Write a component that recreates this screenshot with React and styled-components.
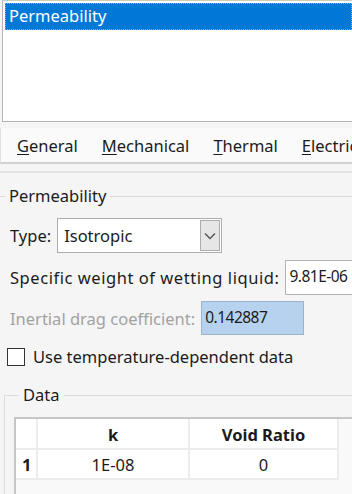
import styled, { createGlobalStyle } from "styled-components";

const GlobalStyle = createGlobalStyle`
  html, body {
    margin: 0;
    padding: 0;
    background: #f5f5f5;
  }
  body {
    font-family: "Noto Sans", "Open Sans", sans-serif;
    font-size: 16.5px;
    color: #1b1b1b;
  }
`;

const Page = styled.div`
  width: 352px;
  height: 494px;
  overflow: hidden;
`;

const ListBox = styled.div`
  height: 118px;
  margin-left: 2px;
  padding: 2px 0 0 2px;
  background: #fff;
  border: 1px solid #b4b4b4;
  border-right: none;
  border-top-color: #c8c8c8;
`;

const ListItem = styled.div`
  height: 27px;
  line-height: 25px;
  padding-left: 4px;
  background: ${(p) => (p.$selected ? "#0078d7" : "transparent")};
  color: ${(p) => (p.$selected ? "#fff" : "#1b1b1b")};
  outline: 1px dotted #e59a3c;
  outline-offset: -1px;
  box-sizing: border-box;
`;

const TabBar = styled.div`
  display: flex;
  gap: 24px;
  margin-top: 6px;
  height: 34px;
  padding-left: 16px;
  align-items: center;
  background: #fafafa;
  border-left: 1px solid #e0e0e0;
  border-bottom: 2px solid #d2d2d2;
  white-space: nowrap;
`;

const Tab = styled.span`
  color: #1b1b1b;
  u {
    text-decoration-thickness: 1px;
    text-underline-offset: 2px;
  }
`;

const Divider = styled.div`
  margin-top: 7px;
  height: 2px;
  background: #e3e3e3;
`;

const Group = styled.fieldset`
  margin: ${(p) => p.$top || "13px"} 0 0 ${(p) => p.$inset || "-4px"};
  padding: 0;
  border: 1px solid #dcdcdc;
  border-right: none;
  border-bottom: none;
  min-width: 0;
`;

const Legend = styled.legend`
  padding: 0 4px;
  margin-left: ${(p) => p.$offset || "8px"};
  line-height: 20px;
`;

const Body = styled.div`
  display: flex;
  flex-direction: column;
  padding: 12px 0 0 13px;
`;

const Row = styled.div`
  display: flex;
  align-items: center;
  gap: 6px;
  white-space: nowrap;
  margin-top: ${(p) => p.$top || "0"};
`;

const Label = styled.span`
  color: ${(p) => (p.$disabled ? "#a2a2a2" : "#1b1b1b")};
  letter-spacing: ${(p) => p.$spacing || "0"};
`;

const Combo = styled.div`
  display: flex;
  width: 165px;
  height: 35px;
  box-sizing: border-box;
  border: 1px solid #adadad;
  background: #fff;
  padding: 1px;
`;

const ComboText = styled.span`
  flex: 1;
  padding-left: 5px;
  line-height: 31px;
`;

const ComboButton = styled.div`
  width: 18px;
  display: flex;
  align-items: center;
  justify-content: center;
  background: #e6e6e6;
  border: 1px solid #acacac;
`;

const Field = styled.div`
  width: ${(p) => p.$width || "120px"};
  flex-shrink: 0;
  height: ${(p) => p.$height || "35px"};
  box-sizing: border-box;
  padding-left: 3px;
  line-height: 31px;
  font-size: 15.5px;
  letter-spacing: -0.5px;
  border: 1px solid ${(p) => (p.$selected ? "#9eb3c8" : "#b4b4b4")};
  background: ${(p) => (p.$selected ? "#b7d2ee" : "#fff")};
  color: #1b1b1b;
`;

const CheckRow = styled.label`
  display: flex;
  align-items: center;
  gap: 8px;
  margin-top: 10px;
  white-space: nowrap;
`;

const Box = styled.span`
  width: 18px;
  height: 18px;
  box-sizing: border-box;
  border: 1px solid #333;
  background: #fff;
  margin-left: -3px;
`;

const TableWrap = styled.div`
  margin: 12px 0 0 9px;
  height: 80px;
  background: #f9f9f9;
  border-top: 2px solid #c6c6c6;
  border-left: 2px solid #c6c6c6;
`;

const Grid = styled.div`
  display: grid;
  grid-template-columns: 22px 152px 149px;
  background: #fff;
  width: fit-content;
`;

const Cell = styled.div`
  height: ${(p) => (p.$head ? "31px" : "30px")};
  line-height: ${(p) => (p.$head ? "31px" : "30px")};
  box-sizing: border-box;
  border-right: 2px solid #ececec;
  border-bottom: 2px solid #ececec;
  text-align: ${(p) => (p.$left ? "left" : "center")};
  padding-left: ${(p) => (p.$left ? "6px" : "0")};
  font-weight: ${(p) => (p.$bold ? 700 : 400)};
  background: #fff;
`;

export default function App() {
  return (
    <Page>
      <GlobalStyle />
      <ListBox>
        <ListItem $selected>Permeability</ListItem>
      </ListBox>
      <TabBar>
        <Tab><u>G</u>eneral</Tab>
        <Tab><u>M</u>echanical</Tab>
        <Tab><u>T</u>hermal</Tab>
        <Tab><u>E</u>lectrical/Magnetic</Tab>
      </TabBar>
      <Divider />
      <Group>
        <Legend $offset="8px">Permeability</Legend>
        <Body>
          <Row>
            <Label>Type:</Label>
            <Combo>
              <ComboText>Isotropic</ComboText>
              <ComboButton>
                <svg width="12" height="8" viewBox="0 0 12 8">
                  <path d="M1 1.5 L6 6.5 L11 1.5" fill="none" stroke="#555" strokeWidth="1.4" />
                </svg>
              </ComboButton>
            </Combo>
          </Row>
          <Row $top="7px">
            <Label $spacing="0.55px">Specific weight of wetting liquid:</Label>
            <Field $width="80px">9.81E-06</Field>
          </Row>
          <Row $top="6px">
            <Label $disabled>Inertial drag coefficient:</Label>
            <Field $width="103px" $height="34px" $selected>0.142887</Field>
          </Row>
          <CheckRow>
            <Box />
            <span>Use temperature-dependent data</span>
          </CheckRow>
          <Group $inset="-6px" $top="17px">
            <Legend $offset="14px">Data</Legend>
            <TableWrap>
              <Grid>
                <Cell $head />
                <Cell $head $bold>k</Cell>
                <Cell $head $bold>Void Ratio</Cell>
                <Cell $left $bold>1</Cell>
                <Cell>1E-08</Cell>
                <Cell>0</Cell>
              </Grid>
            </TableWrap>
          </Group>
        </Body>
      </Group>
    </Page>
  );
}
